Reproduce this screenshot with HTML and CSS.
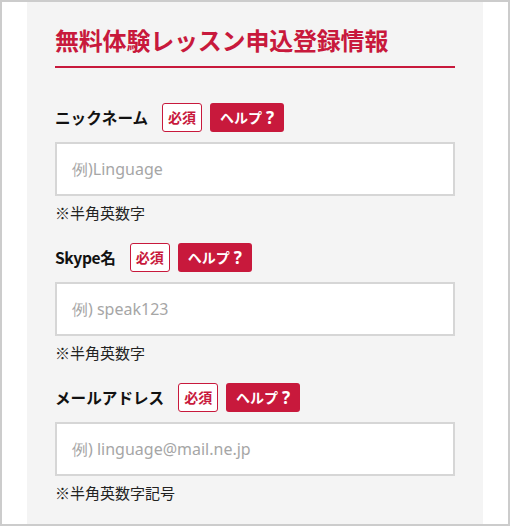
FILE: index.html
```html
<!DOCTYPE html>
<html lang="ja">
<head>
<meta charset="utf-8">
<link rel="stylesheet" href="styles.css">
</head>
<body>
<div class="frame">
  <div class="panel">
    <h1 class="title">無料体験レッスン申込登録情報</h1>
    <div class="field">
      <div class="label-row">
        <span class="label">ニックネーム</span>
        <span class="req">必須</span>
        <span class="help">ヘルプ<span class="q">?</span></span>
      </div>
      <div class="input"><span class="ph">例)Linguage</span></div>
      <div class="note">※半角英数字</div>
    </div>
    <div class="field">
      <div class="label-row">
        <span class="label"><span class="latin">Skype</span>名</span>
        <span class="req">必須</span>
        <span class="help">ヘルプ<span class="q">?</span></span>
      </div>
      <div class="input"><span class="ph">例) speak123</span></div>
      <div class="note">※半角英数字</div>
    </div>
    <div class="field">
      <div class="label-row">
        <span class="label">メールアドレス</span>
        <span class="req">必須</span>
        <span class="help">ヘルプ<span class="q">?</span></span>
      </div>
      <div class="input"><span class="ph">例) linguage@mail.ne.jp</span></div>
      <div class="note">※半角英数字記号</div>
    </div>
  </div>
</div>
</body>
</html>
```
FILE: styles.css
```css
* { box-sizing: border-box; }
html, body { margin: 0; padding: 0; }
body {
  font-family: "Noto Sans CJK JP", "Noto Sans", sans-serif;
  background: #fff;
}
.frame {
  width: 510px;
  height: 526px;
  border: 2px solid #cccccc;
  padding: 0 25px;
  overflow: hidden;
}
.panel {
  width: 456px;
  height: 100%;
  background: #f4f4f4;
  padding: 20px 28px 0;
}
.title {
  margin: 0;
  font-size: 24px;
  line-height: 36px;
  font-weight: 700;
  color: #c8193c;
  padding-bottom: 8px;
  border-bottom: 2px solid #c8193c;
  letter-spacing: -0.2px;
}
.field { margin-top: 34px; }
.field + .field { margin-top: 18px; }
.label-row {
  display: flex;
  align-items: center;
  height: 30px;
}
.label {
  font-size: 15.6px;
  font-weight: 700;
  color: #111;
  margin-right: 14px;
}
.label .latin { letter-spacing: -0.4px; }
.req {
  display: inline-flex;
  align-items: center;
  justify-content: center;
  width: 40px;
  height: 29px;
  border: 1px solid #c8193c;
  border-radius: 3px;
  background: #fff;
  color: #c8193c;
  font-size: 14px;
  font-weight: 700;
  margin-right: 8px;
}
.help {
  display: inline-flex;
  align-items: center;
  justify-content: center;
  width: 74px;
  height: 29px;
  border-radius: 3px;
  background: #c8193c;
  color: #fff;
  font-size: 14px;
  font-weight: 700;
}
.help .q {
  font-family: "Noto Sans", sans-serif;
  font-size: 17px;
  margin-left: 4px;
}
.input {
  margin-top: 10px;
  width: 400px;
  height: 54px;
  background: #fff;
  border: 2px solid #d6d6d6;
  display: flex;
  align-items: center;
  padding-left: 15px;
}
.ph {
  font-family: "Noto Sans", sans-serif;
  font-size: 16px;
  color: #a6a6a6;
}
.note {
  margin-top: 6px;
  font-size: 15px;
  line-height: 22px;
  color: #222;
}
```
